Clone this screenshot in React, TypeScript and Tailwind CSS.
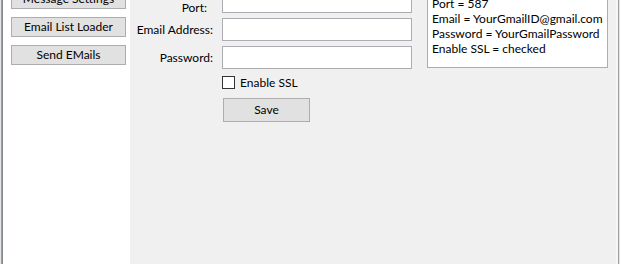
import React, { useState } from "react";

const font = { fontFamily: 'Lato, "Segoe UI", sans-serif' };

const SideButton = ({ label, className = "" }: { label: string; className?: string }) => (
  <button
    className={`h-[20px] w-[115px] whitespace-nowrap border border-[#adadad] bg-[#e1e1e1] text-[12px] leading-none text-black ${className}`}
  >
    {label}
  </button>
);

const Field = ({ label, labelClass = "" }: { label: string; labelClass?: string }) => (
  <>
    <label className={`flex items-center justify-end whitespace-nowrap text-[12px] text-black ${labelClass}`}>
      {label}
    </label>
    <input className="h-[23px] w-[190px] border border-[#abadb3] bg-white px-1 text-[12px] outline-none" />
  </>
);

export default function App() {
  const [ssl, setSsl] = useState(false);

  return (
    <div className="flex h-[264px] w-[620px] overflow-hidden bg-[#f0f0f0]" style={font}>
      {/* window frame, left */}
      <div className="w-px bg-[#e3e3e3]" />
      <div className="w-px bg-[#a0a0a0]" />
      <div className="w-px bg-[#828790]" />

      {/* menu panel */}
      <div className="flex w-[127px] flex-col items-center gap-[8px] bg-white pl-[4px]">
        <SideButton label="Message Settings" className="-mt-[11px]" />
        <SideButton label="Email List Loader" />
        <SideButton label="Send EMails" />
      </div>

      {/* settings panel */}
      <div className="flex flex-1 items-start">
        <div className="-mt-[10px] grid grid-cols-[83px_190px] gap-x-[9px] gap-y-[5px]">
          {/* port label sits a bit lower than its box in the original form */}
          <Field label="Port:" labelClass="pr-[6px] translate-y-[6px]" />
          <Field label="Email Address:" />
          <Field label="Password:" />

          <div />
          <label className="mt-[2px] flex h-[13px] items-center gap-[5px] whitespace-nowrap text-[12px] text-black">
            <input
              type="checkbox"
              checked={ssl}
              onChange={() => setSsl(!ssl)}
              className="h-[13px] w-[13px] appearance-none border border-[#333] bg-white"
            />
            Enable SSL
          </label>

          <div />
          <button className="ml-px mt-[4px] h-[24px] w-[87px] border border-[#adadad] bg-[#e1e1e1] text-[12px] text-black">
            Save
          </button>
        </div>

        <div className="-mt-[10px] ml-[15px] w-[181px] whitespace-nowrap border border-[#abadb3] bg-white px-[4px] pb-[11px] pt-[5px] text-[12px] leading-[15px] text-black">
          <div>Port = 587</div>
          <div>Email = YourGmailID@gmail.com</div>
          <div>Password = YourGmailPassword</div>
          <div>Enable SSL = checked</div>
        </div>
      </div>

      {/* window frame, right */}
      <div className="w-[2px] bg-[#f7f7f7]" />
      <div className="w-px bg-[#a0a0a0]" />
      <div className="w-px bg-[#e3e3e3]" />
    </div>
  );
}
